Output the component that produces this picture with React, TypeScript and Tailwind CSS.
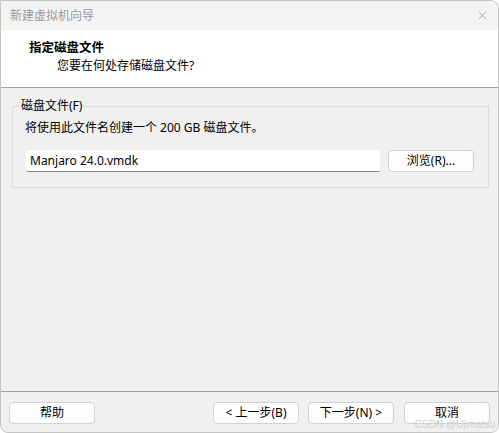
import { X } from 'lucide-react'

const font = { fontFamily: '"Noto Sans", "Noto Sans CJK SC", sans-serif' }

function Btn({ label, className = '' }: { label: string; className?: string }) {
  return (
    <button
      className={`h-[22px] w-[86px] rounded-[4px] border border-[#d0d0d0] bg-[#fdfdfd] text-[12px] leading-none text-black ${className}`}
    >
      {label}
    </button>
  )
}

export default function App() {
  return (
    <div
      style={font}
      className="relative flex h-[433px] w-[499px] flex-col overflow-hidden rounded-tr-[8px] rounded-bl-[8px] rounded-br-[8px] border border-[#c4c4c4] bg-[#f0f0f0] text-[12px] text-black"
    >
      {/* title bar */}
      <div className="flex h-[29px] items-center justify-between bg-[#f3f3f3] pl-[9px] pr-[9px]">
        <span className="text-[12px] text-[#9a9a9a]">新建虚拟机向导</span>
        <X className="h-[13px] w-[13px] text-[#8a8a8a]" strokeWidth={1.2} />
      </div>

      {/* header */}
      <div className="h-[58px] border-b border-[#a0a0a0] bg-white pl-[28px] pt-[9px]">
        <div className="text-[12.5px] font-bold leading-[18px]">指定磁盘文件</div>
        <div className="pl-[28px] text-[12px] leading-[18px]">您要在何处存储磁盘文件?</div>
      </div>

      {/* body */}
      <div className="flex-1 border-b border-[#a0a0a0] pt-[18px]">
        <div className="relative ml-[11px] h-[82px] w-[477px] border border-[#dcdcdc] pl-[12px] pt-[12px]">
          <span className="absolute left-[7px] top-[-9px] bg-[#f0f0f0] px-[1px] leading-[16px]">磁盘文件(F)</span>
          <div className="leading-[18px]">将使用此文件名创建一个 200 GB 磁盘文件。</div>
          <div className="mt-[13px] flex items-center gap-[8px] pl-[1px]">
            <div className="flex h-[22px] w-[354px] items-center rounded-[2px] border-b border-[#8a8a8a] bg-white pl-[4px]">
              Manjaro 24.0.vmdk
            </div>
            <Btn label="浏览(R)..." className="w-[85px]" />
          </div>
        </div>
      </div>

      {/* footer */}
      <div className="flex h-[40px] items-start pl-[8px] pr-[8px] pt-[10px]">
        <Btn label="帮助" className="w-[86px]" />
        <div className="ml-auto flex gap-[9px]">
          <Btn label="< 上一步(B)" />
          <Btn label="下一步(N) >" />
          <Btn label="取消" className="ml-[1px]" />
        </div>
      </div>

      <span
        style={{ fontFamily: '"Liberation Sans", Arial, sans-serif' }}
        className="absolute bottom-[1px] right-[3px] text-[10px] leading-[12px] text-[#cfcfcf]"
      >
        CSDN @Ujimatsu
      </span>
    </div>
  )
}
